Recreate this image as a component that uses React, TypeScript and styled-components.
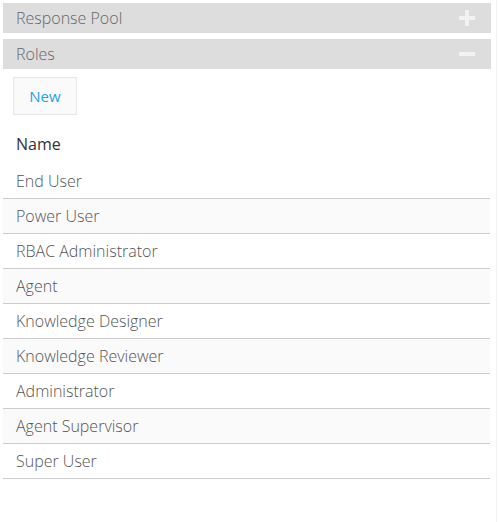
import styled, { createGlobalStyle } from 'styled-components';

const GlobalStyle = createGlobalStyle`
  html, body {
    margin: 0;
    padding: 0;
    background: #ffffff;
    font-family: "Open Sans", "Liberation Sans", sans-serif;
  }
`;

const Page = styled.div`
  width: 498px;
  height: 522px;
  box-sizing: border-box;
  display: flex;
  overflow: hidden;
`;

const Panel = styled.div`
  flex: 1;
  padding: 3px 0 0 3px;
`;

const Rail = styled.div`
  width: 1px;
  border-left: 1px solid #f2f2f2;
`;

const SectionHeader = styled.div`
  width: 488px;
  height: 30px;
  background: #dddddd;
  display: flex;
  align-items: center;
  justify-content: space-between;
  padding: 0 16px 0 13px;
  box-sizing: border-box;
  margin-bottom: 6px;
  font-size: 16px;
  font-weight: 300;
  color: #666666;
`;

const Toggle = styled.svg`
  width: 16px;
  height: 16px;
  display: block;
`;

const Body = styled.div`
  padding: 2px 0 0 10px;
`;

const NewButton = styled.button`
  width: 64px;
  height: 38px;
  background: #fafafa;
  border: 1px solid #e6e6e6;
  color: #1aa3ee;
  font-family: inherit;
  font-size: 15px;
  font-weight: 400;
  padding: 0;
  cursor: pointer;
`;

const Table = styled.div`
  width: 487px;
  margin-left: -10px;
`;

const HeadCell = styled.div`
  height: 49px;
  box-sizing: border-box;
  padding: 9px 0 0 13px;
  display: flex;
  align-items: center;
  font-size: 16px;
  color: #333333;
`;

const Row = styled.div<{ $striped: boolean }>`
  height: 35px;
  box-sizing: border-box;
  padding-left: 13px;
  display: flex;
  align-items: center;
  background: ${p => (p.$striped ? '#fafafa' : '#ffffff')};
  border-bottom: 1px solid #cccccc;
  font-size: 16px;
  font-weight: 300;
  color: #555555;
`;

const roles = [
  'End User',
  'Power User',
  'RBAC Administrator',
  'Agent',
  'Knowledge Designer',
  'Knowledge Reviewer',
  'Administrator',
  'Agent Supervisor',
  'Super User',
];

const App = () => {
  return (
    <>
      <GlobalStyle />
      <Page>
        <Panel>
          <SectionHeader>
            Response Pool
            <Toggle viewBox="0 0 16 16">
              <rect x="6" y="0" width="4" height="16" fill="#f2f2f2" />
              <rect x="0" y="6" width="16" height="4" fill="#f2f2f2" />
            </Toggle>
          </SectionHeader>
          <SectionHeader>
            Roles
            <Toggle viewBox="0 0 16 16">
              <rect x="0" y="6" width="16" height="4" fill="#f2f2f2" />
            </Toggle>
          </SectionHeader>
          <Body>
            <NewButton>New</NewButton>
            <Table>
              <HeadCell>Name</HeadCell>
              {roles.map((r, i) => (
                <Row key={r} $striped={i % 2 === 1}>
                  {r}
                </Row>
              ))}
            </Table>
          </Body>
        </Panel>
        <Rail />
      </Page>
    </>
  );
};

export default App;
